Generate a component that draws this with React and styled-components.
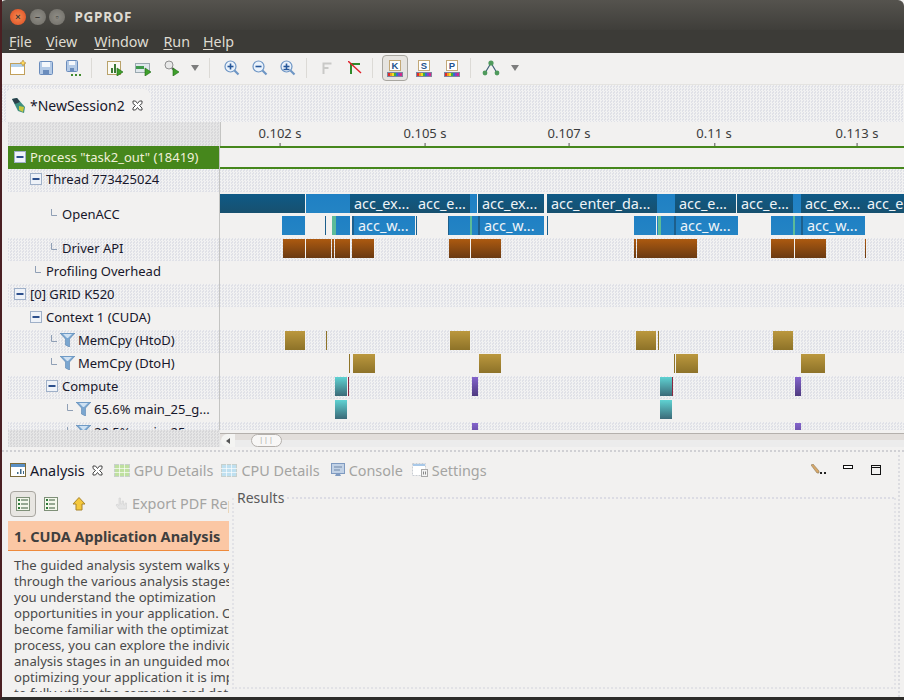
import React from "react";
import styled, { createGlobalStyle } from "styled-components";

const uiFont = `"Noto Sans", "Open Sans", sans-serif`;
const dither = `repeating-conic-gradient(#f2f2f2 0 25%, #e0e1e7 0 50%) 0 0 / 3px 3px`;

const GlobalStyle = createGlobalStyle`
  html, body { margin: 0; padding: 0; background: #f2f1f0; }
  body { font-family: ${uiFont}; }
`;

// ---- icons ----
const Svg = ({ w = 16, h = 16, children, ...rest }) => (
  <svg width={w} height={h} viewBox={`0 0 ${w} ${h}`} {...rest}>
    {children}
  </svg>
);

const Play = ({ x, y }) => <path d={`M${x} ${y}l6 4-6 4z`} fill="#3fa02c" stroke="#1d6a12" strokeWidth=".6" />;

const NewIcon = () => (
  <Svg w={17}>
    <rect x=".5" y="3.5" width="14" height="11" fill="#fff" stroke="#c2a05a" />
    <rect x="1" y="4" width="13" height="3" fill="#b4d2ec" />
    <path d="M13 0l1 2 2 1-2 1-1 2-1-2-2-1 2-1z" fill="#ffd95a" stroke="#b08a3c" strokeWidth=".6" />
  </Svg>
);
const SaveIcon = () => (
  <Svg w={16}>
    <rect x="1.5" y="1.5" width="13" height="13" rx="1" fill="#b4cae6" stroke="#6a8cbc" />
    <rect x="4" y="2" width="8" height="5" fill="#f4f7fb" />
    <rect x="5" y="10" width="6" height="4" fill="#6a8cbc" />
  </Svg>
);
const SaveAllIcon = () => (
  <Svg w={18}>
    <rect x="1.5" y="0.5" width="11" height="11" rx="1" fill="#b4cae6" stroke="#6a8cbc" />
    <rect x="4" y="1" width="6" height="4" fill="#f4f7fb" />
    <rect x="5" y="8" width="4" height="3" fill="#6a8cbc" />
    <rect x="6" y="14" width="2" height="2" fill="#3f8a2c" />
    <rect x="10" y="14" width="2" height="2" fill="#3f8a2c" />
    <rect x="14" y="14" width="2" height="2" fill="#3f8a2c" />
  </Svg>
);
const ChartRunIcon = () => (
  <Svg w={17}>
    <rect x=".5" y="1.5" width="13" height="13" fill="#fbfaf4" stroke="#b9a26a" />
    <path d="M4 8h2v5H4zM7 4h2v9H7zM10 9h2v4h-2z" fill="#3c7a34" />
    <Play x={10} y={8} />
  </Svg>
);
const BarRunIcon = () => (
  <Svg w={17}>
    <rect x=".5" y="3.5" width="14" height="9" fill="#dfe7ec" stroke="#9aa9b0" />
    <rect x="1" y="6" width="8" height="3" fill="#3f9a4c" />
    <Play x={10} y={8} />
  </Svg>
);
const GlassRunIcon = () => (
  <Svg w={17}>
    <circle cx="6" cy="5" r="4" fill="#e8e8e8" stroke="#8f8f8f" />
    <path d="M9 8l3 3" stroke="#6f6f6f" strokeWidth="2" />
    <Play x={10} y={8} />
  </Svg>
);
const Caret = () => (
  <Svg w={8} h={6}>
    <path d="M0 0h8L4 6z" fill="#7d7d7d" />
  </Svg>
);
const ZoomIcon = ({ kind }) => (
  <Svg w={16}>
    <circle cx="6.5" cy="6.5" r="5.5" fill="#eaf2fb" stroke="#6d95c4" strokeWidth="1.2" />
    <path d="M10.5 10.5l4 4" stroke="#6d95c4" strokeWidth="2.2" />
    <path d="M3.5 6.5h6" stroke="#27579a" strokeWidth="1.6" />
    {kind !== "out" && <path d="M6.5 3.5v6" stroke="#27579a" strokeWidth="1.6" />}
    {kind === "fit" && <path d="M3.5 9.5h6" stroke="#27579a" strokeWidth="1.4" />}
  </Svg>
);
const FadedF = () => (
  <Svg w={10} h={13}>
    <path d="M1.5 12V1.5h8M1.5 6h5" fill="none" stroke="#c9c9c7" strokeWidth="2" />
  </Svg>
);
const RedArrow = () => (
  <Svg w={14} h={14}>
    <path d="M3 13V3h9M3 3v0" fill="none" stroke="#2f8a2a" strokeWidth="2" />
    <path d="M0 0l13 12" stroke="#e0202a" strokeWidth="1.4" />
  </Svg>
);
const rainbow = ["#e02a2a", "#f09a20", "#f0e020", "#3fb03f", "#2f6fd0", "#8a3fc0", "#d02a8a"];
const LetterIcon = ({ letter }) => (
  <Svg w={16} h={17}>
    <rect x="2.5" y=".5" width="11" height="10" fill="#fff" stroke="#c2a878" />
    <text x="8" y="9" textAnchor="middle" fontSize="9.5" fontWeight="700" fontFamily="Liberation Sans" fill="#22528f">
      {letter}
    </text>
    <rect x="0" y="12" width="16" height="5" fill="#7c86a0" />
    {rainbow.map((c, i) => (
      <rect key={c} x={1 + i * 2} y="13" width="2" height="3" fill={c} />
    ))}
  </Svg>
);
const TreeIcon = () => (
  <Svg w={18}>
    <path d="M9 3L3 13M9 3l6 10" stroke="#3f5f78" strokeWidth="1.2" />
    <circle cx="9" cy="3" r="2.6" fill="#4f9a5c" />
    <circle cx="3" cy="13" r="2.4" fill="#4f9a5c" />
    <circle cx="15" cy="13" r="2.4" fill="#4f9a5c" />
  </Svg>
);
const SessionIcon = () => (
  <Svg w={15} h={17}>
    <path d="M1 2l5-1 8 9-1 6-6-2z" fill="#3f8f80" />
    <path d="M1 2l5-1 3 4-5 2z" fill="#2c3f4a" />
    <path d="M8 9l5 1-1 5-4-2z" fill="#c8c83c" />
  </Svg>
);
const CloseX = () => (
  <Svg w={11} h={11} style={{ marginLeft: 3 }}>
    <path
      d="M1 1h2.5l2 2.5L7.500 1H10v2.500L7.500 5.500 10 8v2H7.500l-2-2.500-2 2.500H1V8l2.500-2.500L1 3.500z"
      fill="#fff"
      stroke="#333"
      strokeWidth=".9"
    />
  </Svg>
);
const Minus = () => (
  <Svg w={12} h={12}>
    <rect x=".5" y=".5" width="11" height="11" fill="#eef2f8" stroke="#9fb0c8" />
    <path d="M2.500 6h7" stroke="#2c4f8c" strokeWidth="2" />
  </Svg>
);
const Branch = () => (
  <Svg w={6} h={7}>
    <path d="M.5 0v6.500H6" fill="none" stroke="#8f9fb5" />
  </Svg>
);
const Funnel = () => (
  <Svg w={15} h={14}>
    <path d="M0 0h15L9.500 6v8l-4-2V6z" fill="#7aa6d0" stroke="#5a84b0" strokeWidth=".6" />
    <path d="M3 1h9L8 5H7z" fill="#cfe1f2" />
  </Svg>
);
const AnalysisIcon = () => (
  <Svg w={16} h={14}>
    <rect x=".5" y=".5" width="15" height="13" fill="#fff" stroke="#7b6a3a" />
    <rect x="1" y="1" width="14" height="3" fill="#5a8fc4" />
    <path d="M7 11V9h1.500v2zM10 11V6h1.500v5zM13 11V8h1v3z" fill="#3f6a8a" />
  </Svg>
);
const GridTabIcon = ({ tone }) => (
  <Svg w={16} h={13}>
    <rect x=".5" y=".5" width="15" height="12" fill={tone} stroke="#c8d0cc" />
    <path d="M0 4.500h16M0 8.500h16M5.500 0v13M10.500 0v13" stroke="#fff" strokeOpacity=".65" />
  </Svg>
);
const ConsoleIcon = () => (
  <Svg w={14} h={14}>
    <rect x=".5" y=".5" width="13" height="10" fill="#c2d2e6" stroke="#7f9ac0" />
    <path d="M3 4h8M3 7h6" stroke="#6f87a8" />
    <path d="M4 13h6l-1-2H5z" fill="#7f9ac0" />
  </Svg>
);
const SettingsIcon = () => (
  <Svg w={16} h={14}>
    <rect x=".5" y=".5" width="13" height="12" fill="#fff" stroke="#c8cdd2" strokeDasharray="2 1" />
    <rect x="1" y="1" width="12" height="2" fill="#a8c8e8" />
    <rect x="9.500" y="6.500" width="6" height="7" fill="#f4f4f4" stroke="#a8a8a8" />
    <path d="M11.500 8.500v3M13.500 8.500v3" stroke="#888" />
  </Svg>
);
const PencilIcon = () => (
  <Svg w={15} h={12}>
    <path d="M0 1l2-1 6 7 0 2-2 0z" fill="#d8a868" stroke="#8a7a60" strokeWidth=".6" />
    <rect x="9" y="8" width="2" height="2" fill="#222" />
    <rect x="13" y="8" width="2" height="2" fill="#222" />
  </Svg>
);
const ViewMin = () => (
  <Svg w={11} h={11}>
    <rect x=".5" y=".5" width="9" height="3" fill="#fff" stroke="#111" />
  </Svg>
);
const ViewMax = () => (
  <Svg w={11} h={11}>
    <rect x=".5" y=".5" width="9" height="9" fill="none" stroke="#111" />
    <path d="M0 2.500h10" stroke="#111" />
  </Svg>
);
const ListCheckIcon = ({ full }) => (
  <Svg w={14} h={14}>
    <rect x=".5" y=".5" width="13" height="13" fill="#f4f8ec" stroke="#7f9078" />
    {[3, 7, 11].map((y) => (
      <g key={y}>
        <rect x="2" y={y - 1} width="2" height="2" fill="#2f7a3a" />
        <path d={`M5 ${y}h${full ? 7 : 6}`} stroke="#3a5a3a" />
      </g>
    ))}
  </Svg>
);
const UpArrow = () => (
  <Svg w={14} h={14}>
    <path d="M7 .500L13 7H10v6H4V7H1z" fill="#f5c83c" stroke="#a8842a" />
  </Svg>
);
const HandIcon = () => (
  <Svg w={13} h={14}>
    <path d="M4 1h1.500v6H7V4h1.500v4H10V6h1.500v6H4L1 8l1-1 2 1.500z" fill="#e4e4e4" stroke="#d2d2d2" strokeWidth=".6" />
  </Svg>
);

// ---- chrome ----
const Frame = styled.div`
  width: 904px;
  height: 700px;
  overflow: hidden;
  display: flex;
  flex-direction: column;
  background: #f2f1f0;
  border-left: 2px solid #4a1f22;
  border-bottom: 3px solid #2e2d2a;
  box-sizing: border-box;
  color: #1c1c1c;
  font-size: 13px;
`;
const TitleBar = styled.div`
  height: 30px;
  flex: none;
  margin-left: -2px;
  display: flex;
  align-items: center;
  padding: 4px 0 0 10px;
  box-sizing: border-box;
  background: linear-gradient(#55534e, #3f3e3a);
  border-radius: 6px 6px 0 0;
`;
const WinBtn = styled.span`
  width: 16px;
  height: 16px;
  margin-right: 3.500px;
  border-radius: 50%;
  display: flex;
  align-items: center;
  justify-content: center;
  background: ${(p) => (p.$close ? "radial-gradient(#f58a50, #dd4a20)" : "radial-gradient(#8f8d86, #6f6d67)")};
  color: #3c3b37;
  font: 700 9px "Liberation Sans", sans-serif;
`;
const Title = styled.span`
  margin-left: 6px;
  color: #dfdbd2;
  font-weight: 700;
  font-size: 13.500px;
  letter-spacing: 0.7px;
`;
const MenuBar = styled.div`
  height: 23px;
  flex: none;
  display: flex;
  align-items: center;
  padding-left: 7px;
  background: #3c3b37;
  color: #dfdbd2;
  font-size: 14.300px;
`;
const MenuItem = styled.span`
  margin-right: ${(p) => p.$gap}px;
  u {
    text-underline-offset: 2px;
  }
`;
const Toolbar = styled.div`
  height: 31px;
  flex: none;
  display: flex;
  align-items: center;
  padding-left: 2px;
  padding-bottom: 1px;
  box-sizing: border-box;
  background: #f2f1f0;
`;
const ToolBtn = styled.span`
  display: flex;
  align-items: center;
  justify-content: ${(p) => (p.$caret ? "flex-end" : "center")};
  flex: none;
  width: ${(p) => (p.$caret ? 14 : 28)}px;
  margin-right: ${(p) => (p.$caret ? 6 : 0)}px;
  height: 26px;
  box-sizing: border-box;
  border-radius: 4px;
  ${(p) => p.$on && "border: 1px solid #a8a6a0; background: #e6e4e0; width: 26px; margin-right: 2px;"}
`;
const ToolSep = styled.span`
  flex: none;
  width: 1px;
  height: 20px;
  margin: 0 ${(p) => p.$r}px 0 ${(p) => p.$l}px;
  background: #dcdad6;
`;
const EditorStrip = styled.div`
  height: 38px;
  flex: none;
  display: flex;
  align-items: flex-end;
  padding-left: 4px;
  background: ${dither};
  border-top: 1px solid #e4e3e0;
  box-sizing: border-box;
`;
const EditorTab = styled.div`
  width: 144px;
  height: 33px;
  display: flex;
  align-items: center;
  gap: 4px;
  padding-left: 5px;
  box-sizing: border-box;
  background: #f2f1f0;
  border-radius: 6px 6px 0 0;
  font-size: 14px;
  color: #16162a;
`;

// ---- timeline ----
const Timeline = styled.div`
  margin-left: 6px;
  flex: none;
  width: 896px;
  overflow: hidden;
`;
const RulerRow = styled.div`
  height: 24px;
  display: flex;
`;
const RulerCorner = styled.div`
  width: 212px;
  flex: none;
  background: repeating-conic-gradient(#e6e6e6 0 25%, #d8d8da 0 50%) 0 0 / 3px 3px;
`;
const Ruler = styled.div`
  flex: 1;
  position: relative;
  border-left: 1px solid #c4c4c2;
  color: #3c3c3c;
  font-size: 13px;
`;
const Tick = styled.span.attrs((p) => ({ style: { left: p.$x - 220 } }))`
  position: absolute;
  top: 2px;
  transform: translateX(-50%);
  white-space: nowrap;
  &::after {
    content: "";
    position: absolute;
    left: 50%;
    bottom: -4px;
    height: 3px;
    width: 1px;
    background: #555;
  }
`;
const RowsViewport = styled.div`
  height: 284px;
  overflow: hidden;
`;
const RowBox = styled.div`
  display: flex;
  height: ${(p) => p.$h || 23}px;
`;
const TreeCell = styled.div`
  width: 211px;
  flex: none;
  display: flex;
  align-items: center;
  box-sizing: border-box;
  padding-left: ${(p) => 6 + p.$level * 16}px;
  padding-bottom: ${(p) => (p.$head ? 2 : 3)}px;
  white-space: nowrap;
  overflow: hidden;
  color: ${(p) => (p.$head ? "#f0f0d8" : "#17172b")};
  background: ${(p) => (p.$head ? "#46871c" : p.$striped ? dither : "#f2f1f0")};
`;
const Slot = styled.span`
  width: 16px;
  flex: none;
  display: flex;
  justify-content: ${(p) => (p.$leaf ? "center" : "flex-start")};
  padding-bottom: ${(p) => (p.$leaf ? 3 : 0)}px;
  box-sizing: border-box;
`;
const FunnelSlot = styled.span`
  display: flex;
  flex: none;
  margin: 0 3px 0 -2px;
`;
const Divider = styled.div`
  width: 1px;
  flex: none;
  background: #c4c4c2;
`;
const Track = styled.div`
  flex: 1;
  position: relative;
  box-sizing: border-box;
  background: ${(p) => (p.$striped ? dither : "#f2f1f0")};
  ${(p) => p.$head && "border-top: 2px solid #46871c; border-bottom: 2px solid #46871c;"}
`;
const tones = {
  dark: "linear-gradient(#0f5a86, #17506f)",
  light: "linear-gradient(#1f80c4, #2484c4)",
  green: "#5cbb98",
  line: "#1d5f8c",
  driver: "linear-gradient(#ad5a10, #6a3a12)",
  gold: "linear-gradient(#bb983e, #8d7228)",
  goldLine: "#8f7428",
  teal: "linear-gradient(#5fd2d2, #3b6a78)",
  purple: "linear-gradient(#8464cc, #4e3a80)",
  maroon: "#8a2840",
};
const Bar = styled.div.attrs((p) => ({ style: { left: p.$x - 220, width: p.$to - p.$x } }))`
  position: absolute;
  top: ${(p) => p.$top}px;
  height: 19px;
  box-sizing: border-box;
  background: ${(p) => tones[p.$tone]};
  color: #eef4f8;
  font-size: 14.400px;
  line-height: 20px;
  padding-left: ${(p) => (p.$labelled ? 4 : 0)}px;
  white-space: nowrap;
  overflow: hidden;
`;
const ScrollRow = styled.div`
  height: 17px;
  display: flex;
`;
const ScrollCorner = styled.div`
  width: 212px;
  flex: none;
  background: repeating-conic-gradient(#e6e6e6 0 25%, #d6d6d8 0 50%) 0 0 / 3px 3px;
`;
const ScrollTrack = styled.div`
  flex: 1;
  margin-top: 3px;
  display: flex;
  align-items: center;
  box-sizing: border-box;
  border-top: 1px solid #b4b0ac;
  background: linear-gradient(#e2dedb 50%, #ececec 50%);
`;
const ScrollArrow = styled.span`
  width: 14px;
  height: 13px;
  margin-left: 1px;
  border-radius: 7px 0 0 7px;
  background: #f4f4f2;
  display: flex;
  align-items: center;
  justify-content: center;
  &::before {
    content: "";
    border: 3px solid transparent;
    border-right: 4px solid #555;
    border-left: 0;
  }
`;
const Thumb = styled.span`
  width: 31px;
  height: 13px;
  margin-left: 16px;
  box-sizing: border-box;
  border: 1px solid #b4b0ac;
  border-radius: 7px;
  background: #f8f7f6;
  color: #a09c98;
  font-size: 7px;
  line-height: 9px;
  text-align: center;
  letter-spacing: 1px;
`;
const Sash = styled.div`
  height: 5px;
  flex: none;
  margin-bottom: 3px;
  border-bottom: 2px dotted #d0d0d4;
  box-sizing: border-box;
`;

// ---- analysis view ----
const Analysis = styled.div`
  flex: 1;
  min-height: 0;
  display: flex;
  flex-direction: column;
  margin: 0 4px 0 4px;
  border-right: 2px dotted #dcdce0;
`;
const ViewTabs = styled.div`
  height: 31px;
  flex: none;
  display: flex;
  align-items: center;
  padding-left: 4px;
  padding-bottom: 1px;
  box-sizing: border-box;
  font-size: 14.400px;
  color: #a4a4a2;
`;
const ViewTab = styled.span`
  display: flex;
  align-items: center;
  gap: 4px;
  flex: none;
  margin-right: ${(p) => p.$gap || 0}px;
  color: ${(p) => (p.$active ? "#16162a" : "#a4a4a2")};
`;
const ViewActions = styled.div`
  margin-left: auto;
  display: flex;
  align-items: center;
  gap: 17px;
  padding-right: 16px;
`;
const AnalysisBody = styled.div`
  flex: 1;
  min-height: 0;
  display: flex;
`;
const GuidePane = styled.div`
  width: 223px;
  flex: none;
  display: flex;
  flex-direction: column;
  padding-left: 2px;
  box-sizing: border-box;
  overflow: hidden;
`;
const GuideTools = styled.div`
  height: 35px;
  flex: none;
  padding-left: 2px;
  display: flex;
  align-items: center;
  color: #a4a4a2;
  font-size: 14.400px;
  white-space: nowrap;
`;
const GuideBtn = styled.span`
  flex: none;
  display: flex;
  align-items: center;
  justify-content: center;
  width: 26px;
  height: 26px;
  margin-right: ${(p) => p.$gap || 0}px;
  border-radius: 4px;
  box-sizing: border-box;
  ${(p) => p.$on && "border: 1px solid #a8a6a0; background: #e8e6e2;"}
`;
const GuideHead = styled.div`
  height: 30px;
  flex: none;
  width: 221px;
  box-sizing: border-box;
  display: flex;
  align-items: center;
  padding-left: 6px;
  background: #fbc7a4;
  border-bottom: 1px solid #ee8a3c;
  color: #3e3e3e;
  font-weight: 700;
  font-size: 14.500px;
  white-space: nowrap;
`;
const GuideText = styled.div`
  width: 221px;
  height: 135px;
  flex: none;
  margin-top: 6px;
  padding-left: 6px;
  box-sizing: border-box;
  overflow: hidden;
  color: #4a4a4a;
  font-size: 13.100px;
  line-height: 16px;
  white-space: nowrap;
`;
const ResultsPane = styled.div`
  flex: 1;
  margin: 12px 2px 8px 3px;
  display: flex;
  flex-direction: column;
  border-left: 2px dotted #e2e2e6;
  border-right: 2px dotted #e2e2e6;
  border-bottom: 2px dotted #e2e2e6;
`;
const ResultsHead = styled.div`
  display: flex;
  align-items: center;
  gap: 3px;
  padding-left: 3px;
  margin-top: -10px;
  color: #5a5a5a;
  font-size: 14px;
  &::after {
    content: "";
    flex: 1;
    border-top: 2px dotted #dcdce4;
  }
`;

// ---- data ----
const at = (top, tone, spans) => spans.map(([x, to, label]) => ({ top, tone, x, to, label }));

const rows = [
  { label: 'Process "task2_out" (18419)', level: 0, open: true, head: true },
  { label: "Thread 773425024", level: 1, open: true, striped: true },
  {
    label: "OpenACC",
    level: 2,
    h: 46,
    bars: [
      ...at(2, "dark", [
        [220, 305],
        [350, 414, "acc_ex..."],
        [414, 470, "acc_e..."],
        [478, 544, "acc_ex..."],
        [547, 657, "acc_enter_da..."],
        [675, 736, "acc_e..."],
        [737, 793, "acc_e..."],
        [801, 863, "acc_ex..."],
        [863, 904, "acc_e"],
      ]),
      ...at(2, "light", [
        [306, 350],
        [470, 477],
        [657, 675],
        [793, 801],
      ]),
      ...at(24, "light", [
        [282, 305],
        [336, 350],
        [354, 415, "acc_w..."],
        [449, 470],
        [472, 478],
        [480, 544, "acc_w..."],
        [634, 656],
        [657, 658],
        [661, 674],
        [676, 738, "acc_w..."],
        [771, 793],
        [795, 801],
        [803, 865, "acc_w..."],
      ]),
      ...at(24, "green", [
        [332, 336],
        [470, 472],
        [658, 661],
        [793, 795],
      ]),
      ...at(24, "line", [
        [325, 326],
        [352, 354],
        [416, 417],
        [448, 449],
        [478, 480],
        [547, 548],
        [674, 676],
        [801, 803],
      ]),
    ],
  },
  {
    label: "Driver API",
    level: 2,
    striped: true,
    bars: at(1, "driver", [
      [283, 305],
      [306, 331],
      [332, 334],
      [335, 350],
      [352, 374],
      [449, 470],
      [471, 501],
      [634, 636],
      [637, 697],
      [771, 773],
      [773, 794],
      [795, 826],
      [865, 866],
    ]),
  },
  { label: "Profiling Overhead", level: 1 },
  { label: "[0] GRID K520", level: 0, open: true, striped: true },
  { label: "Context 1 (CUDA)", level: 1, open: true },
  {
    label: "MemCpy (HtoD)",
    level: 2,
    filter: true,
    striped: true,
    bars: [
      ...at(1, "gold", [
        [285, 305],
        [450, 470],
        [636, 656],
        [773, 793],
      ]),
      ...at(1, "goldLine", [
        [326, 327],
        [658, 659],
      ]),
    ],
  },
  {
    label: "MemCpy (DtoH)",
    level: 2,
    filter: true,
    bars: [
      ...at(1, "gold", [
        [353, 375],
        [479, 501],
        [676, 698],
        [801, 825],
      ]),
      ...at(1, "goldLine", [
        [349, 350],
        [674, 675],
      ]),
    ],
  },
  {
    label: "Compute",
    level: 2,
    open: true,
    striped: true,
    bars: [
      ...at(1, "teal", [
        [335, 347],
        [660, 672],
      ]),
      ...at(1, "maroon", [
        [348, 349],
        [672, 673],
      ]),
      ...at(1, "purple", [
        [472, 478],
        [795, 801],
      ]),
    ],
  },
  {
    label: "65.6% main_25_g...",
    level: 3,
    filter: true,
    bars: at(1, "teal", [
      [335, 347],
      [660, 672],
    ]),
  },
  {
    label: "29.5% main_25_...",
    level: 3,
    filter: true,
    striped: true,
    bars: at(1, "purple", [
      [472, 478],
      [795, 801],
    ]),
  },
];

const ticks = [
  [279, "0.102 s"],
  [424, "0.105 s"],
  [568, "0.107 s"],
  [713, "0.11 s"],
  [856, "0.113 s"],
];

const guideLines = [
  "The guided analysis system walks you",
  "through the various analysis stages to",
  "you understand the optimization",
  "opportunities in your application. Once",
  "become familiar with the optimization",
  "process, you can explore the individual",
  "analysis stages in an unguided mode. When",
  "optimizing your application it is important",
  "to fully utilize the compute and data",
];

const menus = [
  ["F", "ile", 14],
  ["V", "iew", 17],
  ["W", "indow", 15],
  ["R", "un", 13],
  ["H", "elp", 0],
];

const TreeRow = ({ row }) => (
  <RowBox $h={row.h}>
    <TreeCell $level={row.level} $head={row.head} $striped={row.striped}>
      <Slot $leaf={!row.open}>{row.open ? <Minus /> : <Branch />}</Slot>
      {row.filter && (
        <FunnelSlot>
          <Funnel />
        </FunnelSlot>
      )}
      {row.label}
    </TreeCell>
    <Divider />
    <Track $striped={row.striped} $head={row.head}>
      {(row.bars || []).map((b) => (
        <Bar key={`${b.top}-${b.x}`} $x={b.x} $to={b.to} $top={b.top} $tone={b.tone} $labelled={!!b.label}>
          {b.label}
        </Bar>
      ))}
    </Track>
  </RowBox>
);

const App = () => (
  <>
    <GlobalStyle />
    <Frame>
      <TitleBar>
        <WinBtn $close>×</WinBtn>
        <WinBtn>–</WinBtn>
        <WinBtn>▫</WinBtn>
        <Title>PGPROF</Title>
      </TitleBar>
      <MenuBar>
        {menus.map(([key, rest, gap]) => (
          <MenuItem key={key} $gap={gap}>
            <u>{key}</u>
            {rest}
          </MenuItem>
        ))}
      </MenuBar>
      <Toolbar>
        <ToolBtn>
          <NewIcon />
        </ToolBtn>
        <ToolBtn>
          <SaveIcon />
        </ToolBtn>
        <ToolBtn>
          <SaveAllIcon />
        </ToolBtn>
        <ToolSep $l={3} $r={9} />
        <ToolBtn>
          <ChartRunIcon />
        </ToolBtn>
        <ToolBtn>
          <BarRunIcon />
        </ToolBtn>
        <ToolBtn>
          <GlassRunIcon />
        </ToolBtn>
        <ToolBtn $caret>
          <Caret />
        </ToolBtn>
        <ToolSep $l={4} $r={8} />
        <ToolBtn>
          <ZoomIcon kind="in" />
        </ToolBtn>
        <ToolBtn>
          <ZoomIcon kind="out" />
        </ToolBtn>
        <ToolBtn>
          <ZoomIcon kind="fit" />
        </ToolBtn>
        <ToolSep $l={4} $r={6} />
        <ToolBtn>
          <FadedF />
        </ToolBtn>
        <ToolBtn>
          <RedArrow />
        </ToolBtn>
        <ToolSep $l={3} $r={9} />
        <ToolBtn $on>
          <LetterIcon letter="K" />
        </ToolBtn>
        <ToolBtn>
          <LetterIcon letter="S" />
        </ToolBtn>
        <ToolBtn>
          <LetterIcon letter="P" />
        </ToolBtn>
        <ToolSep $l={4} $r={6} />
        <ToolBtn>
          <TreeIcon />
        </ToolBtn>
        <ToolBtn $caret>
          <Caret />
        </ToolBtn>
      </Toolbar>
      <EditorStrip>
        <EditorTab>
          <SessionIcon />
          *NewSession2
          <CloseX />
        </EditorTab>
      </EditorStrip>
      <Timeline>
        <RulerRow>
          <RulerCorner />
          <Ruler>
            {ticks.map(([x, label]) => (
              <Tick key={label} $x={x}>
                {label}
              </Tick>
            ))}
          </Ruler>
        </RulerRow>
        <RowsViewport>
          {rows.map((row) => (
            <TreeRow key={row.label} row={row} />
          ))}
        </RowsViewport>
        <ScrollRow>
          <ScrollCorner />
          <ScrollTrack>
            <ScrollArrow />
            <Thumb>|||</Thumb>
          </ScrollTrack>
        </ScrollRow>
      </Timeline>
      <Sash />
      <Analysis>
        <ViewTabs>
          <ViewTab $active $gap={11}>
            <AnalysisIcon />
            Analysis
            <CloseX />
          </ViewTab>
          <ViewTab $gap={8}>
            <GridTabIcon tone="#bfe0a0" />
            GPU Details
          </ViewTab>
          <ViewTab $gap={11}>
            <GridTabIcon tone="#bfe0f0" />
            CPU Details
          </ViewTab>
          <ViewTab $gap={9}>
            <ConsoleIcon />
            Console
          </ViewTab>
          <ViewTab>
            <SettingsIcon />
            Settings
          </ViewTab>
          <ViewActions>
            <PencilIcon />
            <ViewMin />
            <ViewMax />
          </ViewActions>
        </ViewTabs>
        <AnalysisBody>
          <GuidePane>
            <GuideTools>
              <GuideBtn $on $gap={2}>
                <ListCheckIcon full />
              </GuideBtn>
              <GuideBtn $gap={2}>
                <ListCheckIcon />
              </GuideBtn>
              <GuideBtn $gap={23}>
                <UpArrow />
              </GuideBtn>
              <ViewTab>
                <HandIcon />
                Export PDF Report
              </ViewTab>
            </GuideTools>
            <GuideHead>1. CUDA Application Analysis</GuideHead>
            <GuideText>
              {guideLines.map((line) => (
                <div key={line}>{line}</div>
              ))}
            </GuideText>
          </GuidePane>
          <ResultsPane>
            <ResultsHead>Results</ResultsHead>
          </ResultsPane>
        </AnalysisBody>
      </Analysis>
    </Frame>
  </>
);

export default App;
